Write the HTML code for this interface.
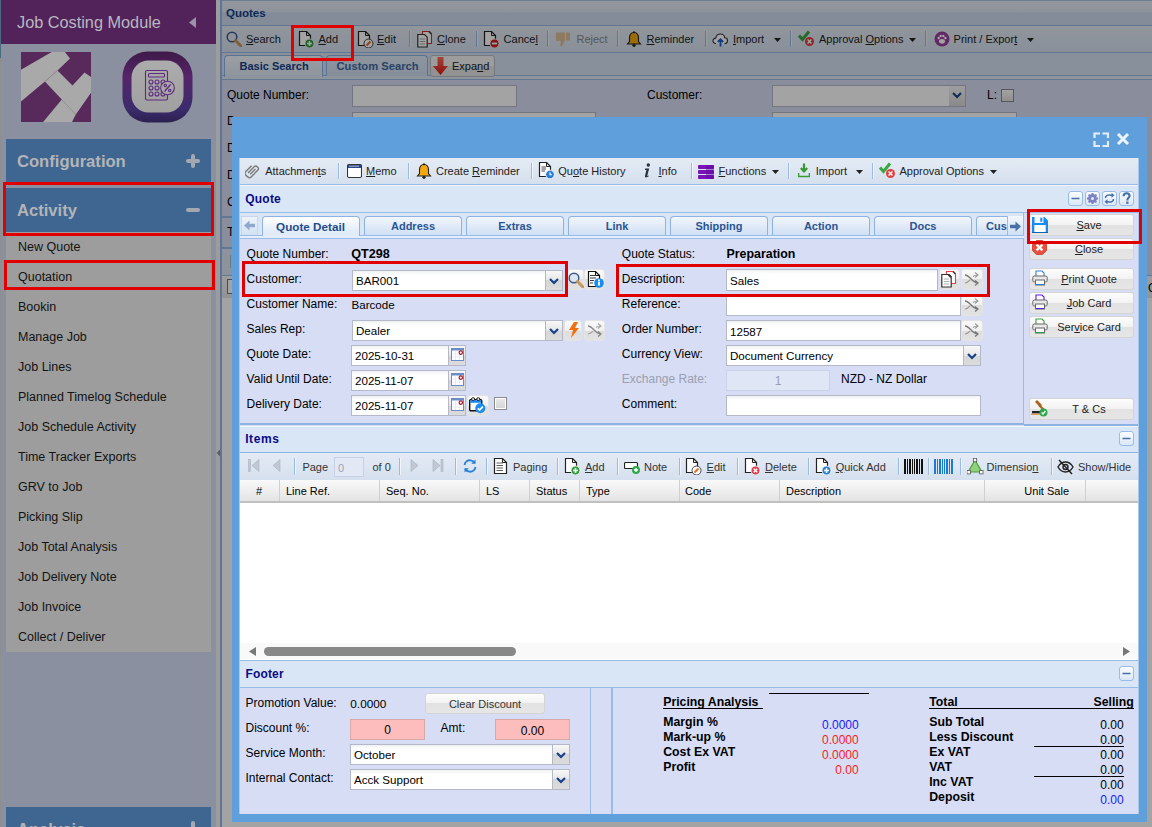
<!DOCTYPE html>
<html><head><meta charset="utf-8">
<style>
*{margin:0;padding:0;box-sizing:border-box}
html,body{width:1152px;height:827px;overflow:hidden;background:#9c9c9c;font-family:"Liberation Sans",sans-serif;position:relative}
.a{position:absolute}
.t{position:absolute;white-space:nowrap}
/* sidebar */
#sb{left:0;top:0;width:216px;height:827px;background:#8a90a0}
#sbh{left:0;top:0;width:216px;height:44px;background:#52235a}
.sbp{left:6px;width:205px;height:44px;background:#3e6690;color:#c3c6cc;font-weight:bold;font-size:17px}
.menu{left:6px;top:232px;width:205px;height:420px;background:#9d9d9d}
.mi{position:absolute;left:18px;font-size:12.5px;line-height:15px;color:#131313;white-space:nowrap}
.red{position:absolute;border:3px solid #e00000}
/* main */
#mp{left:222px;top:0;width:930px;height:827px;background:#8a93a5}
</style></head><body>
<div id="sb" class="a"></div>
<div id="sbh" class="a"></div>
<div class="t" style="left:17px;top:13px;font-size:16.3px;color:#b8b8c0">Job Costing Module</div>
<svg class="a" style="left:189px;top:17px" width="8" height="11"><path d="M7 0 L0 5.5 L7 11Z" fill="#9c92a8"/></svg>
<!-- logos -->
<svg class="a" style="left:21px;top:52px" width="70" height="70" viewBox="0 0 70 70">
<rect width="70" height="70" fill="#582a5c"/>
<path d="M0 17.7 L30.7 0 L43.9 0 L49 6.5 L36.5 18.4 L23.9 29.5 L0 49.6Z" fill="#a9a9a9"/>
<path d="M36.5 18.4 L51.5 33.6 L63.5 20.6 L70 25.1 L70 40.8 L54.8 62.4 L40.8 47.4 L23.9 29.5Z" fill="#a9a9a9"/>
<path d="M22.1 70 L40.8 47.4 L54.8 62.4 L51 70Z" fill="#a9a9a9"/>
<path d="M23.9 29.5 L36.5 18.4" stroke="#8a8a8a" stroke-width="0.8"/>
<path d="M40.8 47.4 L54.8 62.4" stroke="#959595" stroke-width="0.5"/>
</svg>
<svg class="a" style="left:122px;top:51px" width="71" height="72" viewBox="0 0 71 72">
<defs><linearGradient id="lg2" x1="0" y1="0" x2="0" y2="1"><stop offset="0" stop-color="#3e1a48"/><stop offset="0.35" stop-color="#562468"/><stop offset="0.8" stop-color="#3c2c6c"/><stop offset="1" stop-color="#2c2050"/></linearGradient>
<linearGradient id="lg3" x1="0" y1="0" x2="0" y2="1"><stop offset="0" stop-color="#acacac"/><stop offset="1" stop-color="#a0a0a0"/></linearGradient></defs>
<rect x="0.5" y="0.5" width="70" height="71" rx="25" fill="url(#lg2)"/>
<rect x="9.5" y="9.5" width="52" height="52" rx="17" fill="url(#lg3)"/>
<g fill="none" stroke="#5e2a7e" stroke-width="1.1">
<rect x="23.5" y="19.5" width="22" height="29.5" rx="1.5"/>
<rect x="26.5" y="22.5" width="16" height="3.5" rx="1"/>
<circle cx="29" cy="31" r="2"/><circle cx="35" cy="31" r="2"/><circle cx="41" cy="31" r="2"/>
<circle cx="29" cy="37" r="2"/><circle cx="35" cy="37" r="2"/>
<circle cx="29" cy="43" r="2"/><circle cx="35" cy="43" r="2"/><circle cx="41" cy="43" r="2"/>
<circle cx="45.5" cy="37" r="6.8" fill="#a8a8a8"/>
<path d="M42.5 40.5 L48.5 33.5" stroke-width="1.3"/>
<circle cx="43.3" cy="34.5" r="1.2"/><circle cx="47.7" cy="39.5" r="1.2"/>
</g>
</svg>
<div class="sbp a" style="top:139px"></div>
<div class="t" style="left:17px;top:152px;font-size:16.6px;font-weight:bold;color:#b4b4b8">Configuration</div>
<div class="a" style="left:186px;top:159px;width:14px;height:4px;border-radius:2px;background:#a4a8b0"></div>
<div class="a" style="left:191px;top:154px;width:4px;height:14px;border-radius:2px;background:#a4a8b0"></div>
<div class="sbp a" style="top:188px"></div>
<div class="t" style="left:17px;top:201px;font-size:16.6px;font-weight:bold;color:#b4b4b8">Activity</div>
<div class="a" style="left:186px;top:208px;width:14px;height:4px;border-radius:2px;background:#a4a8b0"></div>
<div class="a menu"></div>
<div class="mi" style="top:240px">New Quote</div>
<div class="mi" style="top:270px">Quotation</div>
<div class="mi" style="top:300px">Bookin</div>
<div class="mi" style="top:330px">Manage Job</div>
<div class="mi" style="top:360px">Job Lines</div>
<div class="mi" style="top:390px">Planned Timelog Schedule</div>
<div class="mi" style="top:420px">Job Schedule Activity</div>
<div class="mi" style="top:450px">Time Tracker Exports</div>
<div class="mi" style="top:480px">GRV to Job</div>
<div class="mi" style="top:510px">Picking Slip</div>
<div class="mi" style="top:540px">Job Total Analysis</div>
<div class="mi" style="top:570px">Job Delivery Note</div>
<div class="mi" style="top:600px">Job Invoice</div>
<div class="mi" style="top:630px">Collect / Deliver</div>
<div class="red" style="left:4px;top:260px;width:211px;height:30px"></div>
<div class="sbp a" style="top:807px"></div>
<div class="t" style="left:17px;top:820px;font-size:16.6px;font-weight:bold;color:#b4b4b8">Analysis</div>
<div class="a" style="left:191px;top:821px;width:4px;height:14px;border-radius:2px;background:#a4a8b0"></div>
<div class="red" style="left:3px;top:182px;width:211px;height:54px"></div>
<div class="a" style="left:0;top:0;width:1px;height:58px;background:#4a6a80"></div>
<div class="a" style="left:0;top:58px;width:1px;height:769px;background:#8e8e8e"></div>
<!-- splitter -->
<div class="a" style="left:216px;top:0;width:4px;height:827px;background:#9c9c9c"></div>
<div class="a" style="left:220px;top:0;width:2px;height:827px;background:#5f7499"></div>
<svg class="a" style="left:216px;top:449px" width="4" height="8"><path d="M4 0.5 L0.8 4 L4 7.5Z" fill="#5c5c5c"/></svg>



<div class="a" style="left:0;top:0;width:1152px;height:827px;overflow:hidden">
<div class="a" style="left:222px;top:0px;width:930px;height:827px;background:#d2dbf3"></div><div class="a" style="left:222px;top:0px;width:930px;height:26px;background:linear-gradient(#e6edf7,#dde7f4 45%,#ccdaee 50%,#cfdcef);border-top:1px solid #a8c4ea;border-bottom:1px solid #99bbe8"></div><div class="t" style="left:226px;top:7.77px;font-size:11.5px;line-height:11.5px;color:#15428b;font-weight:bold;">Quotes</div><div class="a" style="left:222px;top:26px;width:930px;height:27px;background:linear-gradient(#e4ebf5,#d6e1f0);border-bottom:1px solid #99bbe8"></div><svg class="a" style="left:226px;top:31px" width="16" height="16" viewBox="0 0 16 16"><circle cx="6" cy="6" r="4.8" fill="#dde6f0" stroke="#3b5a8a" stroke-width="1.5"/><path d="M9.5 9.5 L15 15" stroke="#c8955a" stroke-width="3" stroke-linecap="round"/></svg><div class="t" style="left:246px;top:33.69px;font-size:11px;line-height:11px;color:#222;"><u>S</u>earch</div><svg class="a" style="left:298px;top:31px" width="17" height="17" viewBox="0 0 17 17"><path d="M1.5 0.5 H8.5 L12.5 4.5 V14.5 H1.5Z" fill="#fff" stroke="#222" stroke-width="1.2"/><path d="M8.5 0.5 V4.5 H12.5" fill="none" stroke="#222" stroke-width="1"/><circle cx="11.5" cy="12.5" r="4.5" fill="#2e9e3e" stroke="#fff" stroke-width="0.8"/><path d="M11.5 10 V15 M9 12.5 H14" stroke="#fff" stroke-width="1.6"/></svg><div class="t" style="left:318.5px;top:33.69px;font-size:11px;line-height:11px;color:#222;"><u>A</u>dd</div><svg class="a" style="left:357px;top:31px" width="17" height="17" viewBox="0 0 17 17"><path d="M1.5 0.5 H8.5 L12.5 4.5 V14.5 H1.5Z" fill="#fff" stroke="#222" stroke-width="1.2"/><path d="M8.5 0.5 V4.5 H12.5" fill="none" stroke="#222" stroke-width="1"/><circle cx="11.5" cy="12.5" r="4.5" fill="#fff" stroke="#333" stroke-width="0.9"/><path d="M9.5 14.5 L13.5 10.5" stroke="#e07020" stroke-width="2"/></svg><div class="t" style="left:377px;top:33.69px;font-size:11px;line-height:11px;color:#222;"><u>E</u>dit</div><div class="a" style="left:409px;top:31px;width:1px;height:16px;background:#99bbe8"></div><div class="a" style="left:410px;top:31px;width:1px;height:16px;background:#fff;opacity:.6"></div><svg class="a" style="left:417px;top:31px" width="16" height="17" viewBox="0 0 16 17"><path d="M5.5 0.5 H12 L14.5 3 V12.5 H5.5Z" fill="#fff" stroke="#d03030" stroke-width="1.1"/><path d="M12 0.5 L14.5 3" stroke="#444" stroke-width="1.6"/><path d="M0.8 3.5 H7.5 L10.2 6.2 V16 H0.8Z" fill="#fff" stroke="#333" stroke-width="1.2"/><path d="M2.8 8 H8.2 M2.8 10.5 H8.2 M2.8 13 H8.2" stroke="#777" stroke-width="0.7"/></svg><div class="t" style="left:437px;top:33.69px;font-size:11px;line-height:11px;color:#222;"><u>C</u>lone</div><div class="a" style="left:476px;top:31px;width:1px;height:16px;background:#99bbe8"></div><div class="a" style="left:477px;top:31px;width:1px;height:16px;background:#fff;opacity:.6"></div><svg class="a" style="left:483px;top:31px" width="17" height="17" viewBox="0 0 17 17"><path d="M1.5 0.5 H8.5 L12.5 4.5 V14.5 H1.5Z" fill="#fff" stroke="#222" stroke-width="1.2"/><path d="M8.5 0.5 V4.5 H12.5" fill="none" stroke="#222" stroke-width="1"/><circle cx="11.5" cy="12.5" r="4.5" fill="#d02020" stroke="#fff" stroke-width="0.8"/><path d="M9 12.5 H14" stroke="#fff" stroke-width="1.8"/></svg><div class="t" style="left:503.6px;top:33.69px;font-size:11px;line-height:11px;color:#222;">Cance<u>l</u></div><div class="a" style="left:547px;top:31px;width:1px;height:16px;background:#99bbe8"></div><div class="a" style="left:548px;top:31px;width:1px;height:16px;background:#fff;opacity:.6"></div><svg class="a" style="left:555px;top:31px" width="16" height="16" viewBox="0 0 16 16"><g opacity=".55"><path d="M1 1.5 H10 V9.5 L7 15 C6 15.5 5 15 5.2 14 L5.8 10 H2.2 C1.2 10 0.6 9.3 0.8 8.4Z" fill="#e0a050"/><rect x="11" y="1.5" width="4" height="8" fill="#e0a050"/></g></svg><div class="t" style="left:576.5px;top:33.69px;font-size:11px;line-height:11px;color:#888;">Reject</div><div class="a" style="left:617px;top:31px;width:1px;height:16px;background:#99bbe8"></div><div class="a" style="left:618px;top:31px;width:1px;height:16px;background:#fff;opacity:.6"></div><svg class="a" style="left:626px;top:31px" width="16" height="16" viewBox="0 0 16 16"><path d="M8 1.5 C4.5 1.5 3.5 4.5 3.5 7 V10.5 L1.5 13 H14.5 L12.5 10.5 V7 C12.5 4.5 11.5 1.5 8 1.5Z" fill="#f5a90f" stroke="#222" stroke-width="1.1"/><circle cx="8" cy="14.3" r="1.6" fill="#222"/><circle cx="8" cy="1.3" r="1" fill="#222"/></svg><div class="t" style="left:646.5px;top:33.69px;font-size:11px;line-height:11px;color:#222;"><u>R</u>eminder</div><div class="a" style="left:705px;top:31px;width:1px;height:16px;background:#99bbe8"></div><div class="a" style="left:706px;top:31px;width:1px;height:16px;background:#fff;opacity:.6"></div><svg class="a" style="left:712px;top:31px" width="17" height="16" viewBox="0 0 17 16"><path d="M4 12.5 C1.5 12.5 0.8 10.5 1 9.5 C1.2 8 2.5 7 3.8 7.2 C4 4.5 6 3 8.5 3 C11 3 12.5 5 12.6 6.8 C14.5 6.8 15.5 8.3 15.5 9.7 C15.5 11.3 14.3 12.5 12.5 12.5" fill="#fff" stroke="#333" stroke-width="1.1"/><path d="M8.5 15.5 V8.5 M5.8 11 L8.5 8.3 L11.2 11" stroke="#1a56c8" stroke-width="1.8" fill="none"/></svg><div class="t" style="left:733px;top:33.69px;font-size:11px;line-height:11px;color:#222;"><u>I</u>mport</div><svg class="a" style="left:774px;top:38px" width="7" height="4" viewBox="0 0 7 4"><path d="M0 0 H7 L3.5 4Z" fill="#222"/></svg><div class="a" style="left:790px;top:31px;width:1px;height:16px;background:#99bbe8"></div><div class="a" style="left:791px;top:31px;width:1px;height:16px;background:#fff;opacity:.6"></div><svg class="a" style="left:798px;top:30px" width="17" height="17" viewBox="0 0 17 17"><path d="M1 5.5 L4.5 9.5 L11 1.5" stroke="#3aa640" stroke-width="3" fill="none"/><circle cx="11.5" cy="11.5" r="4.5" fill="#e04040"/><path d="M9.6 9.6 L13.4 13.4 M13.4 9.6 L9.6 13.4" stroke="#fff" stroke-width="1.4"/></svg><div class="t" style="left:819px;top:33.69px;font-size:11px;line-height:11px;color:#222;">Approval <u>O</u>ptions</div><svg class="a" style="left:909px;top:38px" width="7" height="4" viewBox="0 0 7 4"><path d="M0 0 H7 L3.5 4Z" fill="#222"/></svg><div class="a" style="left:925px;top:31px;width:1px;height:16px;background:#99bbe8"></div><div class="a" style="left:926px;top:31px;width:1px;height:16px;background:#fff;opacity:.6"></div><svg class="a" style="left:934px;top:31px" width="16" height="16" viewBox="0 0 16 16"><circle cx="8" cy="8" r="7.5" fill="#9a3fa0"/><ellipse cx="8" cy="10.3" rx="3" ry="2.4" fill="#fff"/><circle cx="4.6" cy="7" r="1.2" fill="#fff"/><circle cx="6.7" cy="5" r="1.2" fill="#fff"/><circle cx="9.3" cy="5" r="1.2" fill="#fff"/><circle cx="11.4" cy="7" r="1.2" fill="#fff"/></svg><div class="t" style="left:953.6px;top:33.69px;font-size:11px;line-height:11px;color:#222;">Print / Expor<u>t</u></div><svg class="a" style="left:1027px;top:38px" width="7" height="4" viewBox="0 0 7 4"><path d="M0 0 H7 L3.5 4Z" fill="#222"/></svg><div class="a" style="left:222px;top:53px;width:930px;height:26px;background:#d4e1f2;border-bottom:1px solid #99bbe8"></div><div class="a" style="left:222px;top:75px;width:930px;height:1px;background:#99bbe8"></div><div class="a" style="left:222px;top:76px;width:930px;height:3px;background:#dfe8f5"></div><div class="a" style="left:224px;top:55px;width:99px;height:22px;border:1px solid #8db2e3;border-bottom:none;border-radius:4px 4px 0 0;background:linear-gradient(#f4f8fd,#dee8f6)"></div><div class="t" style="left:239.5px;top:60.69px;font-size:11px;line-height:11px;color:#15428b;font-weight:bold;">Basic Search</div><div class="a" style="left:326px;top:55px;width:102px;height:21px;border:1px solid #8db2e3;border-bottom:none;border-radius:4px 4px 0 0;background:linear-gradient(#e0eaf7,#cfdef2)"></div><div class="t" style="left:336.5px;top:60.52px;font-size:11.2px;line-height:11.2px;color:#416aa3;font-weight:bold;">Custom Search</div><div class="a" style="left:430px;top:55px;width:65px;height:22px;border:1px solid #b8bcc4;border-radius:3px;background:linear-gradient(#f4f4f4 50%,#e4e4e4 50%)"></div><svg class="a" style="left:433px;top:57px" width="15" height="18" viewBox="0 0 15 18"><defs><linearGradient id="ea" x1="0" y1="0" x2="0" y2="1"><stop offset="0" stop-color="#ff6a5a"/><stop offset="1" stop-color="#e01a14"/></linearGradient></defs><path d="M4.5 0 H10.5 V9 H15 L7.5 18 L0 9 H4.5Z" fill="url(#ea)"/></svg><div class="t" style="left:452px;top:60.69px;font-size:11px;line-height:11px;color:#222;">Expa<u>n</u>d</div><div class="a" style="left:222px;top:79px;width:930px;height:748px;background:#d6ddf5;border-top:1px solid #99bbe8"></div><div class="t" style="left:227px;top:88.84px;font-size:12px;line-height:12px;color:#000;">Quote Number:</div><div class="a" style="left:352px;top:85px;width:165px;height:22px;border:1px solid #b5b8c8;background:#fff"></div><div class="a" style="left:352px;top:112px;width:244px;height:10px;border:1px solid #b5b8c8;background:#fff"></div><div class="t" style="left:647px;top:88.84px;font-size:12px;line-height:12px;color:#000;">Customer:</div><div class="a" style="left:772px;top:85px;width:194px;height:22px;border:1px solid #b5b8c8;background:#fff"></div><div class="a" style="left:949px;top:86px;width:16px;height:20px;background:linear-gradient(#f6f6f6,#d8d8d8)"></div><svg class="a" style="left:952px;top:92px" width="10" height="7" viewBox="0 0 10 7"><path d="M1 1 L5 5 L9 1" stroke="#15428b" stroke-width="2" fill="none"/></svg><div class="t" style="left:987px;top:88.84px;font-size:12px;line-height:12px;color:#000;">L:</div><div class="a" style="left:1001px;top:89px;width:13px;height:13px;border:1px solid #888;background:linear-gradient(#fff,#e0e0e0)"></div><div class="a" style="left:772px;top:112px;width:245px;height:10px;border:1px solid #b5b8c8;background:#fff"></div><div class="t" style="left:227px;top:114.84px;font-size:12px;line-height:12px;color:#000;">D</div><div class="t" style="left:227px;top:141.84px;font-size:12px;line-height:12px;color:#000;">D</div><div class="t" style="left:227px;top:168.84px;font-size:12px;line-height:12px;color:#000;">D</div><div class="t" style="left:227px;top:195.84px;font-size:12px;line-height:12px;color:#000;">C</div><div class="t" style="left:227px;top:225.84px;font-size:12px;line-height:12px;color:#000;">T</div><div class="a" style="left:222px;top:216px;width:10px;height:2px;background:#99bbe8"></div><div class="a" style="left:222px;top:247px;width:10px;height:28px;background:#dde6f4;border-top:2px solid #99bbe8"></div><div class="a" style="left:230px;top:255px;width:1px;height:13px;background:#b5b8c8"></div><div class="a" style="left:222px;top:275px;width:930px;height:24px;background:linear-gradient(#f6f6f6,#e6e6e6);border-top:1px solid #99bbe8;border-bottom:1px solid #c8c8c8"></div><div class="a" style="left:227px;top:279px;width:10px;height:15px;border:1px solid #777;background:#fff"></div><div class="t" style="left:1148px;top:281.84px;font-size:12px;line-height:12px;color:#000;">Qu</div><div class="a" style="left:222px;top:298px;width:930px;height:529px;background:#fff"></div>
</div>
<div class="a" style="left:222px;top:0px;width:930px;height:827px;background:rgba(0,0,0,0.36)"></div>
<div class="red" style="left:291px;top:25px;width:63px;height:36px"></div>
<div class="a" style="left:232px;top:117px;width:915px;height:705px;background:#5fa0dc"></div>
<svg class="a" style="left:1093px;top:132px" width="16" height="15" viewBox="0 0 16 15"><path d="M1.5 6 V1.5 H7 M9.5 1.5 H15 V6 M15 9 V14 H9.5 M7 14 H1.5 V9" stroke="#e6eff9" stroke-width="2.2" fill="none"/></svg>
<svg class="a" style="left:1116px;top:132px" width="14" height="14" viewBox="0 0 14 14"><path d="M2 2 L12 12 M12 2 L2 12" stroke="#eef4fb" stroke-width="3"/></svg>
<div class="a" style="left:239px;top:158px;width:900px;height:656px;background:#d6ddf5"></div>
<div class="a" style="left:239px;top:158px;width:900px;height:27px;background:linear-gradient(#e4ebf5,#d5e0ee);border-bottom:1px solid #99bbe8"></div>
<svg class="a" style="left:245px;top:163px" width="17" height="17" viewBox="0 0 17 17"><g transform="rotate(45 8 8.5)"><path d="M5.5 13 V4 C5.5 1.5 10.5 1.5 10.5 4 V14 C10.5 17 3 17 3 14 V5.5" fill="none" stroke="#7a7a7a" stroke-width="1.4"/><path d="M8 5 V12.5" stroke="#7a7a7a" stroke-width="1.3"/></g></svg>
<div class="t" style="left:265.2px;top:166.19px;font-size:11px;line-height:11px;color:#222;">Attachmen<u>t</u>s</div>
<div class="a" style="left:338px;top:163px;width:1px;height:16px;background:#99bbe8"></div><div class="a" style="left:339px;top:163px;width:1px;height:16px;background:#fff;opacity:.6"></div>
<svg class="a" style="left:347px;top:163px" width="15" height="16" viewBox="0 0 15 16"><rect x="0.5" y="1.5" width="14" height="13" rx="1.5" fill="#fff" stroke="#333" stroke-width="1.1"/><rect x="1" y="2" width="13" height="3" fill="#2a4a8a"/><path d="M3 2.5 V4 M5 2.5 V4 M7 2.5 V4 M9 2.5 V4 M11 2.5 V4" stroke="#fff" stroke-width="0.8"/></svg>
<div class="t" style="left:366px;top:166.19px;font-size:11px;line-height:11px;color:#222;"><u>M</u>emo</div>
<div class="a" style="left:408px;top:163px;width:1px;height:16px;background:#99bbe8"></div><div class="a" style="left:409px;top:163px;width:1px;height:16px;background:#fff;opacity:.6"></div>
<svg class="a" style="left:416px;top:163px" width="16" height="16" viewBox="0 0 16 16"><path d="M8 1.5 C4.5 1.5 3.5 4.5 3.5 7 V10.5 L1.5 13 H14.5 L12.5 10.5 V7 C12.5 4.5 11.5 1.5 8 1.5Z" fill="#f5a90f" stroke="#222" stroke-width="1.1"/><circle cx="8" cy="14.3" r="1.6" fill="#222"/><circle cx="8" cy="1.3" r="1" fill="#222"/></svg>
<div class="t" style="left:436px;top:166.19px;font-size:11px;line-height:11px;color:#222;">Create <u>R</u>eminder</div>
<div class="a" style="left:531px;top:163px;width:1px;height:16px;background:#99bbe8"></div><div class="a" style="left:532px;top:163px;width:1px;height:16px;background:#fff;opacity:.6"></div>
<svg class="a" style="left:538px;top:162px" width="17" height="17" viewBox="0 0 17 17"><path d="M1.5 0.5 H8.5 L12.5 4.5 V14.5 H1.5Z" fill="#fff" stroke="#222" stroke-width="1.2"/><path d="M8.5 0.5 V4.5 H12.5" fill="none" stroke="#222" stroke-width="1"/><path d="M3.5 5 H8 M3.5 7 H8 M3.5 9 H7" stroke="#333" stroke-width="0.9"/><circle cx="12" cy="12.5" r="4.3" fill="#2a7fd0" stroke="#fff" stroke-width="0.8"/><path d="M12 10.3 V12.7 H13.8" stroke="#fff" stroke-width="1.1" fill="none"/></svg>
<div class="t" style="left:558.3px;top:166.19px;font-size:11px;line-height:11px;color:#222;">Qu<u>o</u>te History</div>
<svg class="a" style="left:642px;top:163px" width="9" height="15" viewBox="0 0 9 15"><circle cx="6.3" cy="2" r="1.7" fill="#26323e"/><path d="M3.2 5.5 H7.2 L5.4 12.2 C5.2 13 5.6 13.2 6.6 12.6 L6.8 13.3 C5 14.6 2.6 15 3 13 L4.4 7 H2.9Z" fill="#26323e"/></svg>
<div class="t" style="left:658.5px;top:166.19px;font-size:11px;line-height:11px;color:#222;"><u>I</u>nfo</div>
<div class="a" style="left:691px;top:163px;width:1px;height:16px;background:#99bbe8"></div><div class="a" style="left:692px;top:163px;width:1px;height:16px;background:#fff;opacity:.6"></div>
<svg class="a" style="left:698px;top:164px" width="16" height="16" viewBox="0 0 16 16"><rect x="0" y="1" width="16" height="4" rx="1" fill="#7a12b8"/><rect x="0" y="6" width="16" height="4" rx="1" fill="#7a12b8"/><rect x="0" y="11" width="16" height="4" rx="1" fill="#7a12b8"/><rect x="8" y="1" width="8" height="14" fill="#5a0a98" opacity=".45"/></svg>
<div class="t" style="left:718.5px;top:166.19px;font-size:11px;line-height:11px;color:#222;"><u>F</u>unctions</div>
<svg class="a" style="left:772px;top:170px" width="7" height="4" viewBox="0 0 7 4"><path d="M0 0 H7 L3.5 4Z" fill="#222"/></svg>
<div class="a" style="left:788px;top:163px;width:1px;height:16px;background:#99bbe8"></div><div class="a" style="left:789px;top:163px;width:1px;height:16px;background:#fff;opacity:.6"></div>
<svg class="a" style="left:798px;top:163px" width="12" height="15" viewBox="0 0 12 15"><path d="M6 0.5 V8 M2.8 5 L6 8.3 L9.2 5" stroke="#3a9a30" stroke-width="2.2" fill="none"/><path d="M0.5 10 V13.5 H11.5 V10" stroke="#3a9a30" stroke-width="1.6" fill="none"/></svg>
<div class="t" style="left:815.8px;top:166.19px;font-size:11px;line-height:11px;color:#222;">Import</div>
<svg class="a" style="left:856px;top:170px" width="7" height="4" viewBox="0 0 7 4"><path d="M0 0 H7 L3.5 4Z" fill="#222"/></svg>
<div class="a" style="left:872px;top:163px;width:1px;height:16px;background:#99bbe8"></div><div class="a" style="left:873px;top:163px;width:1px;height:16px;background:#fff;opacity:.6"></div>
<svg class="a" style="left:879px;top:162px" width="17" height="17" viewBox="0 0 17 17"><path d="M1 5.5 L4.5 9.5 L11 1.5" stroke="#3aa640" stroke-width="3" fill="none"/><circle cx="11.5" cy="11.5" r="4.5" fill="#e04040"/><path d="M9.6 9.6 L13.4 13.4 M13.4 9.6 L9.6 13.4" stroke="#fff" stroke-width="1.4"/></svg>
<div class="t" style="left:899.5px;top:166.19px;font-size:11px;line-height:11px;color:#222;">Approval Options</div>
<svg class="a" style="left:990px;top:170px" width="7" height="4" viewBox="0 0 7 4"><path d="M0 0 H7 L3.5 4Z" fill="#222"/></svg>
<div class="a" style="left:239px;top:185px;width:900px;height:28px;background:#d9e6f6;border-top:1px solid #f2f6fb;border-bottom:1px solid #99bbe8"></div>
<div class="t" style="left:245.3px;top:193.34px;font-size:12px;line-height:12px;color:#0b0b85;font-weight:bold;letter-spacing:.2px;">Quote</div>
<div class="a" style="left:1068px;top:191px;width:15px;height:15px;border:1px solid #99bbe8;border-radius:3px;background:linear-gradient(#fbfdff,#dbe7f7)"></div><svg class="a" style="left:1068px;top:191px" width="15" height="15" viewBox="0 0 15 15"><path d="M3.5 7.5 H11.5" stroke="#4a6fa8" stroke-width="1.5"/></svg>
<div class="a" style="left:1085px;top:191px;width:15px;height:15px;border:1px solid #99bbe8;border-radius:3px;background:linear-gradient(#fbfdff,#dbe7f7)"></div><svg class="a" style="left:1085px;top:191px" width="15" height="15" viewBox="0 0 15 15"><circle cx="7.5" cy="7.5" r="4.2" fill="#7c82c4"/><circle cx="11.80" cy="7.50" r="1.3" fill="#7c82c4"/><circle cx="10.54" cy="10.54" r="1.3" fill="#7c82c4"/><circle cx="7.50" cy="11.80" r="1.3" fill="#7c82c4"/><circle cx="4.46" cy="10.54" r="1.3" fill="#7c82c4"/><circle cx="3.20" cy="7.50" r="1.3" fill="#7c82c4"/><circle cx="4.46" cy="4.46" r="1.3" fill="#7c82c4"/><circle cx="7.50" cy="3.20" r="1.3" fill="#7c82c4"/><circle cx="10.54" cy="4.46" r="1.3" fill="#7c82c4"/><circle cx="7.5" cy="7.5" r="1.5" fill="#e8ecf8"/></svg>
<div class="a" style="left:1102px;top:191px;width:15px;height:15px;border:1px solid #99bbe8;border-radius:3px;background:linear-gradient(#fbfdff,#dbe7f7)"></div><svg class="a" style="left:1102px;top:191px" width="15" height="15" viewBox="0 0 15 15"><path d="M3.5 7 C3.5 4.5 6 3.5 9 4.2 L10.5 4.2" stroke="#4a6fa8" stroke-width="1.6" fill="none"/><path d="M9.5 1.8 L12.5 4.3 L9.5 6.8Z" fill="#4a6fa8"/><path d="M11.5 8 C11.5 10.5 9 11.5 6 10.8 L4.5 10.8" stroke="#4a6fa8" stroke-width="1.6" fill="none"/><path d="M5.5 8.2 L2.5 10.7 L5.5 13.2Z" fill="#4a6fa8"/></svg>
<div class="a" style="left:1119px;top:191px;width:15px;height:15px;border:1px solid #99bbe8;border-radius:3px;background:linear-gradient(#fbfdff,#dbe7f7)"></div><svg class="a" style="left:1119px;top:191px" width="15" height="15" viewBox="0 0 15 15"><path d="M4.6 5.2 C4.6 3.2 6 2.3 7.6 2.3 C9.4 2.3 10.6 3.4 10.6 4.9 C10.6 6.6 8.4 7 8.4 8.8 V9.4" stroke="#4070a8" stroke-width="2.1" fill="none"/><rect x="7.2" y="10.6" width="2.3" height="2.2" fill="#4070a8"/></svg>
<div class="a" style="left:239px;top:213px;width:785px;height:26px;background:#d9e6f6;border-right:1px solid #99bbe8"></div>
<div class="a" style="left:239px;top:235px;width:785px;height:1px;background:#99bbe8"></div>
<div class="a" style="left:239px;top:238px;width:785px;height:1px;background:#99bbe8"></div>
<div class="a" style="left:239px;top:236px;width:785px;height:2px;background:#e4eefa"></div>
<div class="a" style="left:241px;top:216px;width:17px;height:19px;background:linear-gradient(#eef3fa,#d3e1f3);border:1px solid #c5d6ee;border-bottom:none"></div>
<svg class="a" style="left:244px;top:220px" width="12" height="11" viewBox="0 0 12 11"><path d="M0 5.5 L5.5 0.5 V3.8 H11 V7.2 H5.5 V10.5Z" fill="#8ea8cf"/></svg>
<div class="a" style="left:262px;top:216px;width:98px;height:20px;border:1px solid #8db2e3;border-bottom:none;border-radius:4px 4px 0 0;background:linear-gradient(#ffffff,#e4edf9 70%,#dfe9f7)"></div>
<div class="a" style="left:263px;top:235px;width:96px;height:3px;background:#e4eefa"></div>
<div class="t" style="left:110.5px;width:400px;text-align:center;top:221.1px;font-size:11.7px;line-height:11.7px;color:#1f4c8c;font-weight:bold;">Quote Detail</div>
<div class="a" style="left:364px;top:216px;width:98px;height:19px;border:1px solid #8db2e3;border-bottom:none;border-radius:4px 4px 0 0;background:linear-gradient(#f2f6fc,#cfdff4)"></div>
<div class="t" style="left:213.0px;width:400px;text-align:center;top:221.49px;font-size:11px;line-height:11px;color:#2a5593;font-weight:bold;">Address</div>
<div class="a" style="left:466px;top:216px;width:98px;height:19px;border:1px solid #8db2e3;border-bottom:none;border-radius:4px 4px 0 0;background:linear-gradient(#f2f6fc,#cfdff4)"></div>
<div class="t" style="left:315.0px;width:400px;text-align:center;top:221.49px;font-size:11px;line-height:11px;color:#2a5593;font-weight:bold;">Extras</div>
<div class="a" style="left:568px;top:216px;width:98px;height:19px;border:1px solid #8db2e3;border-bottom:none;border-radius:4px 4px 0 0;background:linear-gradient(#f2f6fc,#cfdff4)"></div>
<div class="t" style="left:417.0px;width:400px;text-align:center;top:221.49px;font-size:11px;line-height:11px;color:#2a5593;font-weight:bold;">Link</div>
<div class="a" style="left:670px;top:216px;width:98px;height:19px;border:1px solid #8db2e3;border-bottom:none;border-radius:4px 4px 0 0;background:linear-gradient(#f2f6fc,#cfdff4)"></div>
<div class="t" style="left:519.0px;width:400px;text-align:center;top:221.49px;font-size:11px;line-height:11px;color:#2a5593;font-weight:bold;">Shipping</div>
<div class="a" style="left:772px;top:216px;width:98px;height:19px;border:1px solid #8db2e3;border-bottom:none;border-radius:4px 4px 0 0;background:linear-gradient(#f2f6fc,#cfdff4)"></div>
<div class="t" style="left:621.0px;width:400px;text-align:center;top:221.49px;font-size:11px;line-height:11px;color:#2a5593;font-weight:bold;">Action</div>
<div class="a" style="left:874px;top:216px;width:98px;height:19px;border:1px solid #8db2e3;border-bottom:none;border-radius:4px 4px 0 0;background:linear-gradient(#f2f6fc,#cfdff4)"></div>
<div class="t" style="left:723.0px;width:400px;text-align:center;top:221.49px;font-size:11px;line-height:11px;color:#2a5593;font-weight:bold;">Docs</div>
<div class="a" style="left:976px;top:216px;width:31px;height:19px;border:1px solid #8db2e3;border-bottom:none;border-right:none;border-radius:4px 0 0 0;background:linear-gradient(#f2f6fc,#cfdff4)"></div>
<div class="t" style="left:986px;top:221.49px;font-size:11px;line-height:11px;color:#2a5593;font-weight:bold;">Cus</div>
<div class="a" style="left:1007px;top:216px;width:16px;height:19px;background:linear-gradient(#f3f7fc,#cfdff4);border-left:1px solid #99bbe8"></div>
<svg class="a" style="left:1010px;top:221px" width="12" height="11" viewBox="0 0 12 11"><path d="M11 5.5 L5.5 0.5 V3.8 H0 V7.2 H5.5 V10.5Z" fill="#4a6fa8"/></svg>
<div class="a" style="left:239px;top:239px;width:785px;height:186px;border-right:1px solid #99bbe8;border-bottom:2px solid #8db3e2;border-left:1px solid #99bbe8"></div>
<div class="t" style="left:246.6px;top:247.84px;font-size:12px;line-height:12px;color:#000;">Quote Number:</div>
<div class="t" style="left:351.2px;top:247.83px;font-size:12.6px;line-height:12.6px;color:#000;font-weight:bold;">QT298</div>
<div class="t" style="left:246.6px;top:273.34px;font-size:12px;line-height:12px;color:#000;">Customer:</div>
<div class="a" style="left:352px;top:270px;width:211px;height:21px;border:1px solid #b5b8c8;background:linear-gradient(#eef1f3,#fff 4px)"></div><div class="a" style="left:545px;top:271px;width:17px;height:19px;background:linear-gradient(#f8f8f8,#e6e6e6 50%,#d6d6d6 50%,#dcdcdc);border-left:1px solid #b5b8c8"></div><svg class="a" style="left:549px;top:278px" width="10" height="7" viewBox="0 0 10 7"><path d="M1 1 L5 5 L9 1" stroke="#15428b" stroke-width="2.2" fill="none"/></svg><div class="t" style="left:356px;top:274.78px;font-size:11.6px;line-height:11.6px;color:#000;">BAR001</div>
<div class="a" style="left:567px;top:269px;width:17px;height:21px;border:1px solid #e4e4e4;border-radius:3px;background:linear-gradient(#fafafa,#f0f0f0 50%,#dedede 50%,#e2e2e2)"></div>
<svg class="a" style="left:568px;top:272px" width="16" height="16" viewBox="0 0 16 16"><circle cx="6" cy="6" r="4.8" fill="#dde6f0" stroke="#3b5a8a" stroke-width="1.5"/><path d="M9.5 9.5 L15 15" stroke="#c8955a" stroke-width="3" stroke-linecap="round"/></svg>
<div class="a" style="left:584px;top:269px;width:21px;height:21px;border:1px solid #e4e4e4;border-radius:3px;background:linear-gradient(#fafafa,#f0f0f0 50%,#dedede 50%,#e2e2e2)"></div>
<svg class="a" style="left:587px;top:271px" width="17" height="17" viewBox="0 0 17 17"><path d="M1.5 0.5 H8.5 L12.5 4.5 V15.5 H1.5Z" fill="#fff" stroke="#111" stroke-width="1.2"/><path d="M8.5 0.5 V4.5 H12.5" fill="none" stroke="#111" stroke-width="1"/><path d="M3 4.5 H8 M3 7 H9 M3 9.5 H7 M3 12 H6" stroke="#222" stroke-width="0.9"/><circle cx="12" cy="12" r="4.8" fill="#1a8cf0"/><rect x="11.1" y="10.6" width="1.8" height="4" fill="#fff"/><circle cx="12" cy="9.2" r="1" fill="#fff"/></svg>
<div class="t" style="left:246.6px;top:298.34px;font-size:12px;line-height:12px;color:#000;">Customer Name:</div>
<div class="t" style="left:351.5px;top:299.38px;font-size:11.6px;line-height:11.6px;color:#000;">Barcode</div>
<div class="t" style="left:246.6px;top:323.34px;font-size:12px;line-height:12px;color:#000;">Sales Rep:</div>
<div class="a" style="left:352px;top:320px;width:211px;height:21px;border:1px solid #b5b8c8;background:linear-gradient(#eef1f3,#fff 4px)"></div><div class="a" style="left:545px;top:321px;width:17px;height:19px;background:linear-gradient(#f8f8f8,#e6e6e6 50%,#d6d6d6 50%,#dcdcdc);border-left:1px solid #b5b8c8"></div><svg class="a" style="left:549px;top:328px" width="10" height="7" viewBox="0 0 10 7"><path d="M1 1 L5 5 L9 1" stroke="#15428b" stroke-width="2.2" fill="none"/></svg><div class="t" style="left:356px;top:324.78px;font-size:11.6px;line-height:11.6px;color:#000;">Dealer</div>
<div class="a" style="left:564px;top:320px;width:18px;height:21px;border:1px solid #e4e4e4;border-radius:3px;background:linear-gradient(#fafafa,#f0f0f0 50%,#dedede 50%,#e2e2e2)"></div>
<svg class="a" style="left:567px;top:322px" width="13" height="16" viewBox="0 0 13 16"><path d="M7 0 L2 8 H6 L4 16 L12 6 H8 L11 0Z" fill="#f07010"/></svg>
<div class="a" style="left:584px;top:320px;width:21px;height:21px;border:1px solid #e4e4e4;border-radius:3px;background:linear-gradient(#fafafa,#f0f0f0 50%,#dedede 50%,#e2e2e2)"></div>
<svg class="a" style="left:587px;top:322px" width="16" height="16" viewBox="0 0 16 16"><path d="M1 4 C6 4 8 12 14 12 M11 9.5 L14 12 L11 14.5" stroke="#888" stroke-width="1.3" fill="none"/><path d="M1 12 C3.5 12 5 10 6 9 M9 5.5 C10 4.5 11.5 4 14 4 M11 1.5 L14 4 L11 6.5" stroke="#888" stroke-width="1.1" fill="none" opacity=".7"/></svg>
<div class="t" style="left:246.6px;top:348.34px;font-size:12px;line-height:12px;color:#000;">Quote Date:</div>
<div class="a" style="left:351px;top:345px;width:115px;height:21px;border:1px solid #b5b8c8;background:linear-gradient(#eef1f3,#fff 4px)"></div><div class="a" style="left:448px;top:346px;width:17px;height:19px;background:linear-gradient(#f8f8f8,#e6e6e6 50%,#d6d6d6 50%,#dcdcdc);border-left:1px solid #b5b8c8;border-radius:0 2px 0 0"></div><svg class="a" style="left:451px;top:348px" width="13" height="13" viewBox="0 0 13 13"><rect x="0.5" y="0.5" width="12" height="12" fill="#fff" stroke="#6b8cc4" stroke-width="1"/><rect x="0" y="0" width="13" height="2.5" fill="#6b8cc4"/><path d="M4.5 2.5 V12 M8.5 2.5 V12 M1 6 H12 M1 9 H12" stroke="#e2e7f0" stroke-width="0.8"/><circle cx="9.8" cy="4.6" r="1.7" fill="#fff" stroke="#a8182a" stroke-width="1.2"/></svg><div class="t" style="left:355px;top:350.18px;font-size:11.6px;line-height:11.6px;color:#000;">2025-10-31</div>
<div class="t" style="left:246.6px;top:373.34px;font-size:12px;line-height:12px;color:#000;">Valid Until Date:</div>
<div class="a" style="left:351px;top:370px;width:115px;height:21px;border:1px solid #b5b8c8;background:linear-gradient(#eef1f3,#fff 4px)"></div><div class="a" style="left:448px;top:371px;width:17px;height:19px;background:linear-gradient(#f8f8f8,#e6e6e6 50%,#d6d6d6 50%,#dcdcdc);border-left:1px solid #b5b8c8;border-radius:0 2px 0 0"></div><svg class="a" style="left:451px;top:373px" width="13" height="13" viewBox="0 0 13 13"><rect x="0.5" y="0.5" width="12" height="12" fill="#fff" stroke="#6b8cc4" stroke-width="1"/><rect x="0" y="0" width="13" height="2.5" fill="#6b8cc4"/><path d="M4.5 2.5 V12 M8.5 2.5 V12 M1 6 H12 M1 9 H12" stroke="#e2e7f0" stroke-width="0.8"/><circle cx="9.8" cy="4.6" r="1.7" fill="#fff" stroke="#a8182a" stroke-width="1.2"/></svg><div class="t" style="left:355px;top:375.18px;font-size:11.6px;line-height:11.6px;color:#000;">2025-11-07</div>
<div class="t" style="left:246.6px;top:398.34px;font-size:12px;line-height:12px;color:#000;">Delivery Date:</div>
<div class="a" style="left:351px;top:395px;width:115px;height:21px;border:1px solid #b5b8c8;background:linear-gradient(#eef1f3,#fff 4px)"></div><div class="a" style="left:448px;top:396px;width:17px;height:19px;background:linear-gradient(#f8f8f8,#e6e6e6 50%,#d6d6d6 50%,#dcdcdc);border-left:1px solid #b5b8c8;border-radius:0 2px 0 0"></div><svg class="a" style="left:451px;top:398px" width="13" height="13" viewBox="0 0 13 13"><rect x="0.5" y="0.5" width="12" height="12" fill="#fff" stroke="#6b8cc4" stroke-width="1"/><rect x="0" y="0" width="13" height="2.5" fill="#6b8cc4"/><path d="M4.5 2.5 V12 M8.5 2.5 V12 M1 6 H12 M1 9 H12" stroke="#e2e7f0" stroke-width="0.8"/><circle cx="9.8" cy="4.6" r="1.7" fill="#fff" stroke="#a8182a" stroke-width="1.2"/></svg><div class="t" style="left:355px;top:400.18px;font-size:11.6px;line-height:11.6px;color:#000;">2025-11-07</div>
<div class="a" style="left:467px;top:395px;width:22px;height:21px;border:1px solid #e4e4e4;border-radius:3px;background:linear-gradient(#fafafa,#f0f0f0 50%,#dedede 50%,#e2e2e2)"></div>
<svg class="a" style="left:469px;top:397px" width="17" height="17" viewBox="0 0 17 17"><rect x="0.7" y="2.7" width="12" height="11" rx="1" fill="#fff" stroke="#111" stroke-width="1.4"/><rect x="1.2" y="3.2" width="11" height="2.6" fill="#1a8cf0"/><rect x="2.6" y="0.8" width="3" height="2.6" rx="1.2" fill="#fff" stroke="#111" stroke-width="1"/><rect x="7.8" y="0.8" width="3" height="2.6" rx="1.2" fill="#fff" stroke="#111" stroke-width="1"/><circle cx="11.3" cy="11.2" r="5" fill="#1a8cf0"/><path d="M8.8 11.3 L10.7 13.1 L13.8 9.6" stroke="#fff" stroke-width="1.7" fill="none"/></svg>
<div class="a" style="left:494px;top:397px;width:13px;height:13px;border:1px solid #8a8a8a;box-shadow:inset 0 0 0 1px #fff;background:linear-gradient(#eaeaea,#d4d4d4)"></div>
<div class="t" style="left:621.8px;top:247.84px;font-size:12px;line-height:12px;color:#000;">Quote Status:</div>
<div class="t" style="left:726.5px;top:248.0px;font-size:12.4px;line-height:12.4px;color:#000;font-weight:bold;">Preparation</div>
<div class="t" style="left:621.8px;top:273.34px;font-size:12px;line-height:12px;color:#000;">Description:</div>
<div class="a" style="left:726px;top:269px;width:212px;height:22px;border:1px solid #b5b8c8;background:linear-gradient(#eef1f3,#fff 4px)"></div>
<div class="t" style="left:730px;top:275.18px;font-size:11.6px;line-height:11.6px;color:#000;">Sales</div>
<div class="a" style="left:939px;top:269px;width:21px;height:21px;border:1px solid #e4e4e4;border-radius:3px;background:linear-gradient(#fafafa,#f0f0f0 50%,#dedede 50%,#e2e2e2)"></div>
<svg class="a" style="left:941px;top:271px" width="16" height="17" viewBox="0 0 16 17"><path d="M5.5 0.5 H12 L14.5 3 V12.5 H5.5Z" fill="#fff" stroke="#e8404e" stroke-width="1.1"/><path d="M12 0.5 L14.5 3" stroke="#444" stroke-width="1.6"/><path d="M0.8 3.5 H7.5 L10.2 6.2 V16 H0.8Z" fill="#fff" stroke="#333" stroke-width="1.2"/><path d="M7.5 3.5 L10.2 6.2" stroke="#333" stroke-width="2"/><path d="M2.8 8 H8.2 M2.8 10.5 H8.2 M2.8 13 H8.2" stroke="#888" stroke-width="0.7"/></svg>
<div class="a" style="left:961px;top:269px;width:22px;height:21px;border:1px solid #e4e4e4;border-radius:3px;background:linear-gradient(#fafafa,#f0f0f0 50%,#dedede 50%,#e2e2e2)"></div>
<svg class="a" style="left:964px;top:271px" width="16" height="16" viewBox="0 0 16 16"><path d="M1 4 C6 4 8 12 14 12 M11 9.5 L14 12 L11 14.5" stroke="#777" stroke-width="1.3" fill="none"/><path d="M1 12 C3.5 12 5 10 6 9 M9 5.5 C10 4.5 11.5 4 14 4 M11 1.5 L14 4 L11 6.5" stroke="#777" stroke-width="1.1" fill="none" opacity=".7"/></svg>
<div class="t" style="left:621.8px;top:298.34px;font-size:12px;line-height:12px;color:#000;">Reference:</div>
<div class="a" style="left:726px;top:295px;width:235px;height:21px;border:1px solid #b5b8c8;background:linear-gradient(#eef1f3,#fff 4px)"></div>
<div class="a" style="left:961px;top:295px;width:22px;height:21px;border:1px solid #e4e4e4;border-radius:3px;background:linear-gradient(#fafafa,#f0f0f0 50%,#dedede 50%,#e2e2e2)"></div>
<svg class="a" style="left:964px;top:297px" width="16" height="16" viewBox="0 0 16 16"><path d="M1 4 C6 4 8 12 14 12 M11 9.5 L14 12 L11 14.5" stroke="#777" stroke-width="1.3" fill="none"/><path d="M1 12 C3.5 12 5 10 6 9 M9 5.5 C10 4.5 11.5 4 14 4 M11 1.5 L14 4 L11 6.5" stroke="#777" stroke-width="1.1" fill="none" opacity=".7"/></svg>
<div class="t" style="left:621.8px;top:323.34px;font-size:12px;line-height:12px;color:#000;">Order Number:</div>
<div class="a" style="left:726px;top:320px;width:235px;height:21px;border:1px solid #b5b8c8;background:linear-gradient(#eef1f3,#fff 4px)"></div>
<div class="t" style="left:730px;top:326.18px;font-size:11.6px;line-height:11.6px;color:#000;">12587</div>
<div class="a" style="left:961px;top:320px;width:22px;height:21px;border:1px solid #e4e4e4;border-radius:3px;background:linear-gradient(#fafafa,#f0f0f0 50%,#dedede 50%,#e2e2e2)"></div>
<svg class="a" style="left:964px;top:322px" width="16" height="16" viewBox="0 0 16 16"><path d="M1 4 C6 4 8 12 14 12 M11 9.5 L14 12 L11 14.5" stroke="#777" stroke-width="1.3" fill="none"/><path d="M1 12 C3.5 12 5 10 6 9 M9 5.5 C10 4.5 11.5 4 14 4 M11 1.5 L14 4 L11 6.5" stroke="#777" stroke-width="1.1" fill="none" opacity=".7"/></svg>
<div class="t" style="left:621.8px;top:348.34px;font-size:12px;line-height:12px;color:#000;">Currency View:</div>
<div class="a" style="left:726px;top:345px;width:255px;height:21px;border:1px solid #b5b8c8;background:linear-gradient(#eef1f3,#fff 4px)"></div><div class="a" style="left:963px;top:346px;width:17px;height:19px;background:linear-gradient(#f8f8f8,#e6e6e6 50%,#d6d6d6 50%,#dcdcdc);border-left:1px solid #b5b8c8"></div><svg class="a" style="left:967px;top:353px" width="10" height="7" viewBox="0 0 10 7"><path d="M1 1 L5 5 L9 1" stroke="#15428b" stroke-width="2.2" fill="none"/></svg><div class="t" style="left:730px;top:349.78px;font-size:11.6px;line-height:11.6px;color:#000;">Document Currency</div>
<div class="t" style="left:621.8px;top:373.34px;font-size:12px;line-height:12px;color:#9aa0b0;">Exchange Rate:</div>
<div class="a" style="left:726px;top:370px;width:104px;height:21px;border:1px solid #c8d4ea;background:#dfe6f5"></div>
<div class="t" style="left:578px;width:400px;text-align:center;top:374.84px;font-size:12px;line-height:12px;color:#9aa0b0;">1</div>
<div class="t" style="left:841px;top:372.84px;font-size:12px;line-height:12px;color:#000;">NZD - NZ Dollar</div>
<div class="t" style="left:621.8px;top:398.34px;font-size:12px;line-height:12px;color:#000;">Comment:</div>
<div class="a" style="left:726px;top:395px;width:255px;height:21px;border:1px solid #b5b8c8;background:linear-gradient(#eef1f3,#fff 4px)"></div>
<div class="a" style="left:1024px;top:213px;width:115px;height:213px;background:#d6ddf5;border-bottom:2px solid #8db3e2"></div>
<div class="a" style="left:1029px;top:214px;width:105px;height:22px;border:1px solid #d4d4d4;border-radius:3px;background:linear-gradient(#fdfdfd,#f2f2f2 50%,#e2e2e2 50%,#e6e6e6)"></div>
<svg class="a" style="left:1032px;top:217px" width="16" height="16" viewBox="0 0 16 16"><path d="M0 0 H12.5 L16 3.5 V16 H0Z" fill="#1a8cf0"/><rect x="2.5" y="0" width="9" height="6" fill="#f2f6fa"/><rect x="8.3" y="0.8" width="2" height="4" fill="#1a8cf0"/><rect x="2.3" y="8" width="11.4" height="7" fill="#fff"/><rect x="0" y="15" width="16" height="1" fill="#1064b8"/></svg>
<div class="t" style="left:889px;width:400px;text-align:center;top:220.09px;font-size:11px;line-height:11px;color:#222;"><u>S</u>ave</div>
<div class="a" style="left:1029px;top:238px;width:105px;height:22px;border:1px solid #d4d4d4;border-radius:3px;background:linear-gradient(#fdfdfd,#f2f2f2 50%,#e2e2e2 50%,#e6e6e6)"></div>
<svg class="a" style="left:1032px;top:240px" width="15" height="15" viewBox="0 0 15 15"><path d="M4.5 0.5 H10.5 L14.5 4.5 V10.5 L10.5 14.5 H4.5 L0.5 10.5 V4.5Z" fill="#e8503e" stroke="#c83828" stroke-width="0.8"/><path d="M4.6 4.6 L10.4 10.4 M10.4 4.6 L4.6 10.4" stroke="#fff" stroke-width="2.2"/></svg>
<div class="t" style="left:889px;width:400px;text-align:center;top:244.09px;font-size:11px;line-height:11px;color:#222;"><u>C</u>lose</div>
<div class="a" style="left:1029px;top:268px;width:105px;height:22px;border:1px solid #d4d4d4;border-radius:3px;background:linear-gradient(#fdfdfd,#f2f2f2 50%,#e2e2e2 50%,#e6e6e6)"></div>
<svg class="a" style="left:1032px;top:270px" width="16" height="16" viewBox="0 0 16 16"><path d="M4 6 V1 H10 L12 3 V6" fill="#fff" stroke="#3a80d0" stroke-width="1.1"/><rect x="0.8" y="6" width="14.4" height="6" rx="1.5" fill="#e8e8e8" stroke="#666" stroke-width="1"/><rect x="3.5" y="10" width="9" height="5" fill="#fff" stroke="#666" stroke-width="1"/><path d="M4 14.5 H12" stroke="#3a80d0" stroke-width="1"/></svg>
<div class="t" style="left:889px;width:400px;text-align:center;top:274.09px;font-size:11px;line-height:11px;color:#222;"><u>P</u>rint Quote</div>
<div class="a" style="left:1029px;top:292px;width:105px;height:22px;border:1px solid #d4d4d4;border-radius:3px;background:linear-gradient(#fdfdfd,#f2f2f2 50%,#e2e2e2 50%,#e6e6e6)"></div>
<svg class="a" style="left:1032px;top:294px" width="16" height="16" viewBox="0 0 16 16"><path d="M4 6 V1 H10 L12 3 V6" fill="#fff" stroke="#5a20e0" stroke-width="1.1"/><rect x="0.8" y="6" width="14.4" height="6" rx="1.5" fill="#e8e8e8" stroke="#666" stroke-width="1"/><rect x="3.5" y="10" width="9" height="5" fill="#fff" stroke="#666" stroke-width="1"/><path d="M4 14.5 H12" stroke="#5a20e0" stroke-width="1"/></svg>
<div class="t" style="left:889px;width:400px;text-align:center;top:298.09px;font-size:11px;line-height:11px;color:#222;"><u>J</u>ob Card</div>
<div class="a" style="left:1029px;top:316px;width:105px;height:22px;border:1px solid #d4d4d4;border-radius:3px;background:linear-gradient(#fdfdfd,#f2f2f2 50%,#e2e2e2 50%,#e6e6e6)"></div>
<svg class="a" style="left:1032px;top:318px" width="16" height="16" viewBox="0 0 16 16"><path d="M4 6 V1 H10 L12 3 V6" fill="#fff" stroke="#3aa040" stroke-width="1.1"/><rect x="0.8" y="6" width="14.4" height="6" rx="1.5" fill="#e8e8e8" stroke="#666" stroke-width="1"/><rect x="3.5" y="10" width="9" height="5" fill="#fff" stroke="#666" stroke-width="1"/><path d="M4 14.5 H12" stroke="#3aa040" stroke-width="1"/></svg>
<div class="t" style="left:889px;width:400px;text-align:center;top:322.09px;font-size:11px;line-height:11px;color:#222;">Ser<u>v</u>ice Card</div>
<div class="a" style="left:1029px;top:398px;width:105px;height:22px;border:1px solid #d4d4d4;border-radius:3px;background:linear-gradient(#fdfdfd,#f2f2f2 50%,#e2e2e2 50%,#e6e6e6)"></div>
<svg class="a" style="left:1031px;top:399px" width="17" height="18" viewBox="0 0 17 18"><path d="M6 1 L11 6 L9 8 L4 3Z" fill="#a8621e"/><path d="M8 6 L15 13" stroke="#a8621e" stroke-width="2.2"/><rect x="1" y="12" width="9" height="2.5" fill="#222"/><rect x="0" y="14.5" width="11" height="1.5" fill="#d9a060"/><circle cx="12.5" cy="13.5" r="4" fill="#2ea84a"/><path d="M10.6 13.5 L12 15 L14.5 12" stroke="#fff" stroke-width="1.3" fill="none"/></svg>
<div class="t" style="left:889px;width:400px;text-align:center;top:404.09px;font-size:11px;line-height:11px;color:#222;">T &amp; Cs</div>
<div class="a" style="left:239px;top:426px;width:900px;height:28px;background:#d9e6f6;border-top:1px solid #f2f6fb;border-bottom:2px solid #8db3e2"></div>
<div class="t" style="left:245.2px;top:433.34px;font-size:12px;line-height:12px;color:#0b0b85;font-weight:bold;letter-spacing:.6px;">Items</div>
<div class="a" style="left:1119px;top:431px;width:15px;height:15px;border:1px solid #99bbe8;border-radius:3px;background:linear-gradient(#fbfdff,#dbe7f7)"></div><svg class="a" style="left:1119px;top:431px" width="15" height="15" viewBox="0 0 15 15"><path d="M3.5 7.5 H11.5" stroke="#4a6fa8" stroke-width="1.5"/></svg>
<div class="a" style="left:239px;top:453px;width:900px;height:27px;background:linear-gradient(#e4ebf5,#d5e0ee)"></div>
<svg class="a" style="left:248px;top:459px" width="12" height="13" viewBox="0 0 12 13"><rect x="0.5" y="0.5" width="2" height="12" fill="#c0c8d4" stroke="#a8b2c0" stroke-width=".6"/><path d="M11 0.5 L4 6.5 L11 12.5Z" fill="#c0c8d4" stroke="#a8b2c0" stroke-width=".6"/></svg>
<svg class="a" style="left:272px;top:459px" width="9" height="13" viewBox="0 0 9 13"><path d="M8 0.5 L1 6.5 L8 12.5Z" fill="#c0c8d4" stroke="#a8b2c0" stroke-width=".6"/></svg>
<div class="a" style="left:294px;top:458px;width:1px;height:17px;background:#99bbe8"></div><div class="a" style="left:295px;top:458px;width:1px;height:17px;background:#fff;opacity:.6"></div>
<div class="t" style="left:302.4px;top:462.19px;font-size:11px;line-height:11px;color:#333;">Page</div>
<div class="a" style="left:334px;top:457px;width:30px;height:20px;border:1px solid #c5d2e6;background:#e2e9f4"></div>
<div class="t" style="left:338px;top:462.69px;font-size:11px;line-height:11px;color:#9aa4b4;">0</div>
<div class="t" style="left:372.5px;top:462.19px;font-size:11px;line-height:11px;color:#333;">of 0</div>
<div class="a" style="left:399px;top:458px;width:1px;height:17px;background:#99bbe8"></div><div class="a" style="left:400px;top:458px;width:1px;height:17px;background:#fff;opacity:.6"></div>
<svg class="a" style="left:410px;top:459px" width="9" height="13" viewBox="0 0 9 13"><path d="M1 0.5 L8 6.5 L1 12.5Z" fill="#c0c8d4" stroke="#a8b2c0" stroke-width=".6"/></svg>
<svg class="a" style="left:432px;top:459px" width="12" height="13" viewBox="0 0 12 13"><path d="M1 0.5 L8 6.5 L1 12.5Z" fill="#c0c8d4" stroke="#a8b2c0" stroke-width=".6"/><rect x="9" y="0.5" width="2" height="12" fill="#c0c8d4" stroke="#a8b2c0" stroke-width=".6"/></svg>
<div class="a" style="left:455px;top:458px;width:1px;height:17px;background:#99bbe8"></div><div class="a" style="left:456px;top:458px;width:1px;height:17px;background:#fff;opacity:.6"></div>
<svg class="a" style="left:462px;top:458px" width="16" height="16" viewBox="0 0 16 16"><path d="M2.5 7 C3 4 5.5 2 8.5 2.3 C10.5 2.5 12 3.5 13 5" stroke="#2a7fd0" stroke-width="1.8" fill="none"/><path d="M13.5 1.5 V5.8 H9.2Z" fill="#2a7fd0"/><path d="M13.5 9 C13 12 10.5 14 7.5 13.7 C5.5 13.5 4 12.5 3 11" stroke="#2a7fd0" stroke-width="1.8" fill="none"/><path d="M2.5 14.5 V10.2 H6.8Z" fill="#2a7fd0"/></svg>
<div class="a" style="left:486px;top:458px;width:1px;height:17px;background:#99bbe8"></div><div class="a" style="left:487px;top:458px;width:1px;height:17px;background:#fff;opacity:.6"></div>
<svg class="a" style="left:493px;top:458px" width="15" height="17" viewBox="0 0 15 17"><path d="M1.5 0.5 H9.5 L13.5 4.5 V15.5 H1.5Z" fill="#fff" stroke="#222" stroke-width="1.2"/><path d="M9.5 0.5 V4.5 H13.5" fill="none" stroke="#222" stroke-width="1"/><path d="M3.5 5 H10 M3.5 7.5 H10 M3.5 10 H10 M3.5 12.5 H10" stroke="#333" stroke-width="0.8"/></svg>
<div class="t" style="left:513px;top:462.19px;font-size:11px;line-height:11px;color:#333;">Paging</div>
<div class="a" style="left:557px;top:458px;width:1px;height:17px;background:#99bbe8"></div><div class="a" style="left:558px;top:458px;width:1px;height:17px;background:#fff;opacity:.6"></div>
<svg class="a" style="left:564px;top:458px" width="17" height="17" viewBox="0 0 17 17"><path d="M1.5 0.5 H8.5 L12.5 4.5 V14.5 H1.5Z" fill="#fff" stroke="#222" stroke-width="1.2"/><path d="M8.5 0.5 V4.5 H12.5" fill="none" stroke="#222" stroke-width="1"/><circle cx="11.5" cy="12.5" r="4.5" fill="#2e9e3e" stroke="#fff" stroke-width="0.8"/><path d="M11.5 10 V15 M9 12.5 H14" stroke="#fff" stroke-width="1.6"/></svg>
<div class="t" style="left:585px;top:462.19px;font-size:11px;line-height:11px;color:#333;"><u>A</u>dd</div>
<div class="a" style="left:617px;top:458px;width:1px;height:17px;background:#99bbe8"></div><div class="a" style="left:618px;top:458px;width:1px;height:17px;background:#fff;opacity:.6"></div>
<svg class="a" style="left:624px;top:459px" width="17" height="16" viewBox="0 0 17 16"><rect x="0.5" y="3.5" width="13" height="6" rx="1" fill="#fff" stroke="#222" stroke-width="1.2"/><circle cx="12" cy="11" r="4" fill="#2ea84a"/><path d="M12 9 V13 M10 11 H14" stroke="#fff" stroke-width="1.4"/></svg>
<div class="t" style="left:644px;top:462.19px;font-size:11px;line-height:11px;color:#333;">Note</div>
<div class="a" style="left:679px;top:458px;width:1px;height:17px;background:#99bbe8"></div><div class="a" style="left:680px;top:458px;width:1px;height:17px;background:#fff;opacity:.6"></div>
<svg class="a" style="left:685px;top:458px" width="17" height="17" viewBox="0 0 17 17"><path d="M1.5 0.5 H8.5 L12.5 4.5 V14.5 H1.5Z" fill="#fff" stroke="#222" stroke-width="1.2"/><path d="M8.5 0.5 V4.5 H12.5" fill="none" stroke="#222" stroke-width="1"/><circle cx="11.5" cy="12.5" r="4.5" fill="#fff" stroke="#333" stroke-width="0.9"/><path d="M9.5 14.5 L13.5 10.5" stroke="#e07020" stroke-width="2"/></svg>
<div class="t" style="left:706.6px;top:462.19px;font-size:11px;line-height:11px;color:#333;"><u>E</u>dit</div>
<div class="a" style="left:737px;top:458px;width:1px;height:17px;background:#99bbe8"></div><div class="a" style="left:738px;top:458px;width:1px;height:17px;background:#fff;opacity:.6"></div>
<svg class="a" style="left:744px;top:458px" width="17" height="17" viewBox="0 0 17 17"><path d="M1.5 0.5 H8.5 L12.5 4.5 V14.5 H1.5Z" fill="#fff" stroke="#222" stroke-width="1.2"/><path d="M8.5 0.5 V4.5 H12.5" fill="none" stroke="#222" stroke-width="1"/><circle cx="11.5" cy="12.5" r="4.5" fill="#e04050" stroke="#fff" stroke-width="0.8"/><path d="M9.8 10.8 L13.2 14.2 M13.2 10.8 L9.8 14.2" stroke="#fff" stroke-width="1.4"/></svg>
<div class="t" style="left:765px;top:462.19px;font-size:11px;line-height:11px;color:#333;"><u>D</u>elete</div>
<div class="a" style="left:808px;top:458px;width:1px;height:17px;background:#99bbe8"></div><div class="a" style="left:809px;top:458px;width:1px;height:17px;background:#fff;opacity:.6"></div>
<svg class="a" style="left:815px;top:458px" width="17" height="17" viewBox="0 0 17 17"><path d="M1.5 0.5 H8.5 L12.5 4.5 V14.5 H1.5Z" fill="#fff" stroke="#222" stroke-width="1.2"/><path d="M8.5 0.5 V4.5 H12.5" fill="none" stroke="#222" stroke-width="1"/><circle cx="11.5" cy="12.5" r="4.5" fill="#2a7fd0" stroke="#fff" stroke-width="0.8"/><path d="M11.5 10 V15 M9 12.5 H14" stroke="#fff" stroke-width="1.6"/></svg>
<div class="t" style="left:835.7px;top:462.19px;font-size:11px;line-height:11px;color:#333;"><u>Q</u>uick Add</div>
<div class="a" style="left:898px;top:458px;width:1px;height:17px;background:#99bbe8"></div><div class="a" style="left:899px;top:458px;width:1px;height:17px;background:#fff;opacity:.6"></div>
<svg class="a" style="left:904px;top:459px" width="19" height="15" viewBox="0 0 19 15"><rect x="0" y="0" width="2" height="15" fill="#111"/><rect x="3" y="0" width="1" height="15" fill="#111"/><rect x="5" y="0" width="2" height="15" fill="#111"/><rect x="8" y="0" width="1" height="15" fill="#111"/><rect x="10" y="0" width="1" height="15" fill="#111"/><rect x="12" y="0" width="2" height="15" fill="#111"/><rect x="15" y="0" width="1" height="15" fill="#111"/><rect x="17" y="0" width="2" height="15" fill="#111"/></svg>
<div class="a" style="left:928px;top:458px;width:1px;height:17px;background:#99bbe8"></div><div class="a" style="left:929px;top:458px;width:1px;height:17px;background:#fff;opacity:.6"></div>
<svg class="a" style="left:934px;top:459px" width="19" height="15" viewBox="0 0 19 15"><rect x="0" y="0" width="2" height="15" fill="#1a7ad8"/><rect x="3" y="0" width="1" height="15" fill="#1a7ad8"/><rect x="5" y="0" width="2" height="15" fill="#1a7ad8"/><rect x="8" y="0" width="1" height="15" fill="#1a7ad8"/><rect x="10" y="0" width="1" height="15" fill="#1a7ad8"/><rect x="12" y="0" width="2" height="15" fill="#1a7ad8"/><rect x="15" y="0" width="1" height="15" fill="#1a7ad8"/><rect x="17" y="0" width="2" height="15" fill="#1a7ad8"/></svg>
<div class="a" style="left:960px;top:458px;width:1px;height:17px;background:#99bbe8"></div><div class="a" style="left:961px;top:458px;width:1px;height:17px;background:#fff;opacity:.6"></div>
<svg class="a" style="left:967px;top:458px" width="17" height="17" viewBox="0 0 17 17"><path d="M8 2 L15 14 H1Z" fill="#8fd07a" stroke="#4a9a3a" stroke-width="1.1"/><rect x="6.3" y="0.3" width="3.4" height="3.4" fill="#fff" stroke="#555" stroke-width="0.8"/><rect x="0" y="12.5" width="3.4" height="3.4" fill="#fff" stroke="#555" stroke-width="0.8"/><rect x="12.6" y="12.5" width="3.4" height="3.4" fill="#fff" stroke="#555" stroke-width="0.8"/></svg>
<div class="t" style="left:986.5px;top:462.19px;font-size:11px;line-height:11px;color:#333;">Dimensio<u>n</u></div>
<div class="a" style="left:1051px;top:458px;width:1px;height:17px;background:#99bbe8"></div><div class="a" style="left:1052px;top:458px;width:1px;height:17px;background:#fff;opacity:.6"></div>
<svg class="a" style="left:1057px;top:459px" width="17" height="16" viewBox="0 0 17 16"><path d="M1 8 C3 4.5 5.5 3 8.5 3 C11.5 3 14 4.5 16 8 C14 11.5 11.5 13 8.5 13 C5.5 13 3 11.5 1 8Z" fill="none" stroke="#222" stroke-width="1.4"/><circle cx="8.5" cy="8" r="2.5" fill="none" stroke="#222" stroke-width="1.4"/><path d="M2 1 L15 15" stroke="#222" stroke-width="1.5"/></svg>
<div class="t" style="left:1078px;top:462.19px;font-size:11px;line-height:11px;color:#333;">Show/Hide</div>
<div class="a" style="left:239px;top:480px;width:900px;height:23px;background:linear-gradient(#f9f9f9,#e4e4e4);border-bottom:2px solid #c0c0c0"></div>
<div class="a" style="left:279px;top:480px;width:1px;height:21px;background:#d0d0d0"></div>
<div class="a" style="left:379px;top:480px;width:1px;height:21px;background:#d0d0d0"></div>
<div class="a" style="left:479px;top:480px;width:1px;height:21px;background:#d0d0d0"></div>
<div class="a" style="left:529px;top:480px;width:1px;height:21px;background:#d0d0d0"></div>
<div class="a" style="left:579px;top:480px;width:1px;height:21px;background:#d0d0d0"></div>
<div class="a" style="left:679px;top:480px;width:1px;height:21px;background:#d0d0d0"></div>
<div class="a" style="left:779px;top:480px;width:1px;height:21px;background:#d0d0d0"></div>
<div class="a" style="left:984px;top:480px;width:1px;height:21px;background:#d0d0d0"></div>
<div class="a" style="left:1085px;top:480px;width:1px;height:21px;background:#d0d0d0"></div>
<div class="t" style="left:59px;width:400px;text-align:center;top:486.19px;font-size:11px;line-height:11px;color:#000;">#</div>
<div class="t" style="left:286px;top:486.19px;font-size:11px;line-height:11px;color:#000;">Line Ref.</div>
<div class="t" style="left:386px;top:486.19px;font-size:11px;line-height:11px;color:#000;">Seq. No.</div>
<div class="t" style="left:486px;top:486.19px;font-size:11px;line-height:11px;color:#000;">LS</div>
<div class="t" style="left:536px;top:486.19px;font-size:11px;line-height:11px;color:#000;">Status</div>
<div class="t" style="left:586px;top:486.19px;font-size:11px;line-height:11px;color:#000;">Type</div>
<div class="t" style="left:685px;top:486.19px;font-size:11px;line-height:11px;color:#000;">Code</div>
<div class="t" style="left:786px;top:486.19px;font-size:11px;line-height:11px;color:#000;">Description</div>
<div class="t" style="right:83px;top:486.19px;font-size:11px;line-height:11px;color:#000;">Unit Sale</div>
<div class="a" style="left:239px;top:503px;width:900px;height:157px;background:#fff"></div>
<div class="a" style="left:240px;top:643px;width:898px;height:16px;background:#f9f9f9"></div>
<svg class="a" style="left:249px;top:647px" width="7" height="9" viewBox="0 0 7 9"><path d="M7 0 L0 4.5 L7 9Z" fill="#777"/></svg>
<div class="a" style="left:264px;top:647px;width:252px;height:9px;background:#888;border-radius:5px"></div>
<svg class="a" style="left:1123px;top:647px" width="7" height="9" viewBox="0 0 7 9"><path d="M0 0 L7 4.5 L0 9Z" fill="#777"/></svg>
<div class="a" style="left:239px;top:660px;width:900px;height:28px;background:#d9e6f6;border-top:1px solid #99bbe8;border-bottom:1px solid #99bbe8"></div>
<div class="t" style="left:245.5px;top:668.34px;font-size:12px;line-height:12px;color:#0b0b85;font-weight:bold;letter-spacing:.15px;">Footer</div>
<div class="a" style="left:1119px;top:666px;width:15px;height:15px;border:1px solid #99bbe8;border-radius:3px;background:linear-gradient(#fbfdff,#dbe7f7)"></div><svg class="a" style="left:1119px;top:666px" width="15" height="15" viewBox="0 0 15 15"><path d="M3.5 7.5 H11.5" stroke="#4a6fa8" stroke-width="1.5"/></svg>
<div class="a" style="left:590px;top:688px;width:1px;height:126px;background:#99bbe8"></div>
<div class="a" style="left:611px;top:688px;width:2px;height:126px;background:#99bbe8"></div>
<div class="t" style="left:245.5px;top:696.84px;font-size:12px;line-height:12px;color:#000;">Promotion Value:</div>
<div class="t" style="left:350.3px;top:698.51px;font-size:11.8px;line-height:11.8px;color:#000;">0.0000</div>
<div class="a" style="left:425px;top:693px;width:120px;height:21px;border:1px solid #d4d4d4;border-radius:3px;background:linear-gradient(#fdfdfd,#f2f2f2 50%,#e2e2e2 50%,#e6e6e6)"></div>
<div class="t" style="left:285px;width:400px;text-align:center;top:698.69px;font-size:11px;line-height:11px;color:#333;">Clear Discount</div>
<div class="t" style="left:245.5px;top:721.84px;font-size:12px;line-height:12px;color:#000;">Discount %:</div>
<div class="a" style="left:350px;top:719px;width:75px;height:21px;border:1px solid #d8a8a8;background:#fdbdbd"></div>
<div class="t" style="left:187.5px;width:400px;text-align:center;top:723.84px;font-size:12px;line-height:12px;color:#000;">0</div>
<div class="t" style="left:440.6px;top:721.84px;font-size:12px;line-height:12px;color:#000;">Amt:</div>
<div class="a" style="left:495px;top:719px;width:75px;height:21px;border:1px solid #d8a8a8;background:#fdbdbd"></div>
<div class="t" style="left:332.5px;width:400px;text-align:center;top:724.84px;font-size:12px;line-height:12px;color:#000;">0.00</div>
<div class="t" style="left:245.5px;top:746.84px;font-size:12px;line-height:12px;color:#000;">Service Month:</div>
<div class="a" style="left:350px;top:744px;width:220px;height:21px;border:1px solid #b5b8c8;background:linear-gradient(#eef1f3,#fff 4px)"></div><div class="a" style="left:552px;top:745px;width:17px;height:19px;background:linear-gradient(#f8f8f8,#e6e6e6 50%,#d6d6d6 50%,#dcdcdc);border-left:1px solid #b5b8c8"></div><svg class="a" style="left:556px;top:752px" width="10" height="7" viewBox="0 0 10 7"><path d="M1 1 L5 5 L9 1" stroke="#15428b" stroke-width="2.2" fill="none"/></svg><div class="t" style="left:354px;top:748.78px;font-size:11.6px;line-height:11.6px;color:#000;">October</div>
<div class="t" style="left:245.5px;top:771.84px;font-size:12px;line-height:12px;color:#000;">Internal Contact:</div>
<div class="a" style="left:350px;top:769px;width:220px;height:21px;border:1px solid #b5b8c8;background:linear-gradient(#eef1f3,#fff 4px)"></div><div class="a" style="left:552px;top:770px;width:17px;height:19px;background:linear-gradient(#f8f8f8,#e6e6e6 50%,#d6d6d6 50%,#dcdcdc);border-left:1px solid #b5b8c8"></div><svg class="a" style="left:556px;top:777px" width="10" height="7" viewBox="0 0 10 7"><path d="M1 1 L5 5 L9 1" stroke="#15428b" stroke-width="2.2" fill="none"/></svg><div class="t" style="left:354px;top:773.78px;font-size:11.6px;line-height:11.6px;color:#000;">Acck Support</div>
<div class="t" style="left:663.2px;top:696.29px;font-size:12.3px;line-height:12.3px;color:#000;font-weight:bold;">Pricing Analysis</div>
<div class="a" style="left:663px;top:708px;width:100px;height:1px;background:#000"></div>
<div class="a" style="left:769px;top:693px;width:100px;height:1px;background:#000"></div>
<div class="t" style="left:663.2px;top:716.39px;font-size:12.3px;line-height:12.3px;color:#000;font-weight:bold;">Margin %</div>
<div class="t" style="left:663.2px;top:731.39px;font-size:12.3px;line-height:12.3px;color:#000;font-weight:bold;">Mark-up %</div>
<div class="t" style="left:663.2px;top:746.39px;font-size:12.3px;line-height:12.3px;color:#000;font-weight:bold;">Cost Ex VAT</div>
<div class="t" style="left:663.2px;top:761.39px;font-size:12.3px;line-height:12.3px;color:#000;font-weight:bold;">Profit</div>
<div class="t" style="right:293.29999999999995px;top:719.14px;font-size:12px;line-height:12px;color:#1a1aff;">0.0000</div>
<div class="t" style="right:293.29999999999995px;top:734.14px;font-size:12px;line-height:12px;color:#ff1a1a;">0.0000</div>
<div class="t" style="right:293.29999999999995px;top:749.14px;font-size:12px;line-height:12px;color:#ff1a1a;">0.0000</div>
<div class="t" style="right:293.29999999999995px;top:764.14px;font-size:12px;line-height:12px;color:#ff1a1a;">0.00</div>
<div class="t" style="left:929.2px;top:696.29px;font-size:12.3px;line-height:12.3px;color:#000;font-weight:bold;">Total</div>
<div class="t" style="right:18.200000000000045px;top:696.29px;font-size:12.3px;line-height:12.3px;color:#000;font-weight:bold;">Selling</div>
<div class="a" style="left:929px;top:708px;width:205px;height:1px;background:#000"></div>
<div class="t" style="left:929.2px;top:716.39px;font-size:12.3px;line-height:12.3px;color:#000;font-weight:bold;">Sub Total</div>
<div class="t" style="left:929.2px;top:731.39px;font-size:12.3px;line-height:12.3px;color:#000;font-weight:bold;">Less Discount</div>
<div class="t" style="left:929.2px;top:746.39px;font-size:12.3px;line-height:12.3px;color:#000;font-weight:bold;">Ex VAT</div>
<div class="t" style="left:929.2px;top:761.39px;font-size:12.3px;line-height:12.3px;color:#000;font-weight:bold;">VAT</div>
<div class="t" style="left:929.2px;top:776.39px;font-size:12.3px;line-height:12.3px;color:#000;font-weight:bold;">Inc VAT</div>
<div class="t" style="left:929.2px;top:791.39px;font-size:12.3px;line-height:12.3px;color:#000;font-weight:bold;">Deposit</div>
<div class="t" style="right:28.299999999999955px;top:719.34px;font-size:12px;line-height:12px;color:#000;">0.00</div>
<div class="t" style="right:28.299999999999955px;top:734.34px;font-size:12px;line-height:12px;color:#000;">0.00</div>
<div class="t" style="right:28.299999999999955px;top:749.34px;font-size:12px;line-height:12px;color:#000;">0.00</div>
<div class="t" style="right:28.299999999999955px;top:764.34px;font-size:12px;line-height:12px;color:#000;">0.00</div>
<div class="t" style="right:28.299999999999955px;top:779.34px;font-size:12px;line-height:12px;color:#000;">0.00</div>
<div class="t" style="right:28.299999999999955px;top:794.34px;font-size:12px;line-height:12px;color:#1a1aff;">0.00</div>
<div class="a" style="left:1034px;top:746px;width:90px;height:1px;background:#000"></div>
<div class="a" style="left:1034px;top:776px;width:90px;height:1px;background:#000"></div>
<div class="a" style="left:239px;top:158px;width:1px;height:656px;background:#a9c6ec"></div>
<div class="a" style="left:1138px;top:158px;width:1px;height:656px;background:#a9c6ec"></div>
<div class="red" style="left:242px;top:261px;width:326px;height:36px"></div>
<div class="red" style="left:616px;top:264px;width:374px;height:33px"></div>
<div class="red" style="left:1027px;top:209px;width:115px;height:35px"></div>
</body></html>
